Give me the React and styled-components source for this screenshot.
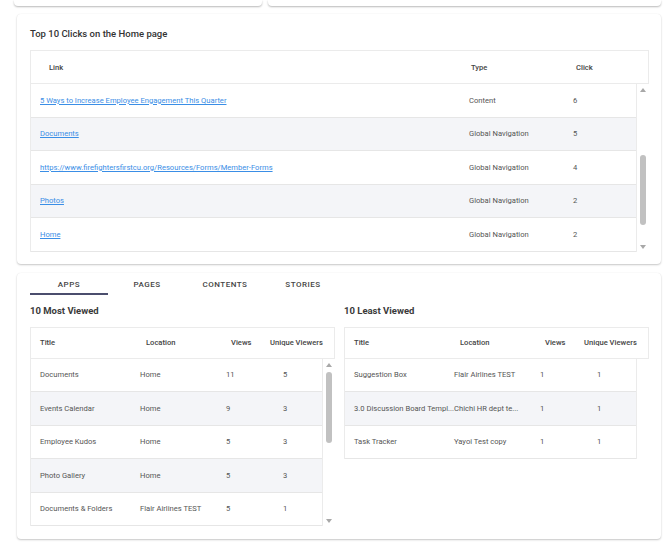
import React, { useState } from 'react';
import styled, { createGlobalStyle } from 'styled-components';

const GlobalStyle = createGlobalStyle`
    body {
        margin: 0;
        background: #ffffff;
        font-family: Roboto, "Liberation Sans", Arial, sans-serif;
    }
`;

const topClicks = [
    { link: '5 Ways to Increase Employee Engagement This Quarter', type: 'Content', click: 6 },
    { link: 'Documents', type: 'Global Navigation', click: 5 },
    { link: 'https://www.firefightersfirstcu.org/Resources/Forms/Member-Forms', type: 'Global Navigation', click: 4 },
    { link: 'Photos', type: 'Global Navigation', click: 2 },
    { link: 'Home', type: 'Global Navigation', click: 2 },
];

const mostViewed = [
    ['Documents', 'Home', '11', '5'],
    ['Events Calendar', 'Home', '9', '3'],
    ['Employee Kudos', 'Home', '5', '3'],
    ['Photo Gallery', 'Home', '5', '3'],
    ['Documents & Folders', 'Flair Airlines TEST', '5', '1'],
];

const leastViewed = [
    ['Suggestion Box', 'Flair Airlines TEST', '1', '1'],
    ['3.0 Discussion Board Templ...', 'Chichi HR dept te...', '1', '1'],
    ['Task Tracker', 'Yayoi Test copy', '1', '1'],
];

const tabs = ['Apps', 'Pages', 'Contents', 'Stories'];

// grid templates (header / body differ a bit like the original)
const clickHead = '422px 105px 1fr';
const clickBody = '429px 104px 1fr';
const viewHead = '106px 85px 39px 1fr';
const viewBody = '100px 86px 57px 1fr';

const Scrollbar = ({ thumbTop, thumbHeight, hidden }) => (
    <ScrollTrack>
        {!hidden && (
            <>
                <Arrow />
                <Thumb style={{ top: thumbTop, height: thumbHeight }} />
                <Arrow down />
            </>
        )}
    </ScrollTrack>
);

const ViewTable = ({ rows, scroll }) => (
    <TableBox>
        <HeadRow cols={viewHead} height={32}>
            <span>Title</span>
            <span>Location</span>
            <span>Views</span>
            <span>Unique Viewers</span>
        </HeadRow>
        <BodyWrap>
            <Rows>
                {rows.map((r, i) => (
                    <Row key={i} cols={viewBody} striped={i % 2 === 1}>
                        {r.map((c, j) => (
                            <Cell key={j}>{c}</Cell>
                        ))}
                    </Row>
                ))}
            </Rows>
            <Scrollbar hidden={!scroll} thumbTop={13} thumbHeight={71} />
        </BodyWrap>
    </TableBox>
);

const App = () => {
    const [tab, setTab] = useState(0);

    return (
        <Page>
            <GlobalStyle />
            <TopRow>
                <StubCard />
                <StubCard />
            </TopRow>

            <Card>
                <CardTitle>Top 10 Clicks on the Home page</CardTitle>
                <TableBox>
                    <HeadRow cols={clickHead} height={34} pad={18}>
                        <span>Link</span>
                        <span>Type</span>
                        <span>Click</span>
                    </HeadRow>
                    <BodyWrap>
                        <Rows>
                            {topClicks.map((r, i) => (
                                <Row key={i} cols={clickBody} striped={i % 2 === 1}>
                                    <Cell>
                                        <Link href="#">{r.link}</Link>
                                    </Cell>
                                    <Cell>{r.type}</Cell>
                                    <Cell>{r.click}</Cell>
                                </Row>
                            ))}
                        </Rows>
                        <Scrollbar thumbTop={71} thumbHeight={70} />
                    </BodyWrap>
                </TableBox>
            </Card>

            <Card bottom>
                <TabBar>
                    {tabs.map((t, i) => (
                        <Tab key={t} active={tab === i} onClick={() => setTab(i)}>
                            {t}
                        </Tab>
                    ))}
                </TabBar>
                <Columns>
                    <div>
                        <SectionTitle>10 Most Viewed</SectionTitle>
                        <ViewTable rows={mostViewed} scroll />
                    </div>
                    <div>
                        <SectionTitle>10 Least Viewed</SectionTitle>
                        <ViewTable rows={leastViewed} />
                    </div>
                </Columns>
            </Card>
        </Page>
    );
};

export default App;

// Styled Components
const Page = styled.div`
    width: 670px;
    height: 550px;
    overflow: hidden;
    box-sizing: border-box;
`;

const TopRow = styled.div`
    display: grid;
    grid-template-columns: 248px 393px;
    gap: 6px;
    padding-left: 14px;
    height: 6px;
    margin-bottom: 8px;
`;

const StubCard = styled.div`
    background: #ffffff;
    border-radius: 0 0 4px 4px;
    box-shadow: 0 1px 2px rgba(0, 0, 0, 0.28);
`;

const Card = styled.div`
    margin: ${({ bottom }) => (bottom ? '9px 9px 0 17px' : '0 9px 0 17px')};
    padding: ${({ bottom }) => (bottom ? '3px 12px 13px 13px' : '13px 12px 12px 13px')};
    background: #ffffff;
    border-radius: 4px;
    box-shadow: 0 1px 2px rgba(0, 0, 0, 0.22), 0 0 1px rgba(0, 0, 0, 0.08);
`;

const CardTitle = styled.div`
    font-size: 9.5px;
    font-weight: 500;
    color: #333333;
    line-height: 14px;
    margin-bottom: 9px;
`;

const TableBox = styled.div`
    display: flex;
    flex-direction: column;
`;

const HeadRow = styled.div`
    display: grid;
    grid-template-columns: ${({ cols }) => cols};
    align-items: center;
    height: ${({ height }) => height}px;
    padding-left: ${({ pad }) => pad || 9}px;
    border: 1px solid #ebebeb;
    box-sizing: border-box;
    font-size: 7.6px;
    font-weight: 500;
    color: #444444;
`;

const BodyWrap = styled.div`
    display: flex;
`;

const Rows = styled.div`
    flex: 1;
    border-left: 1px solid #ebebeb;
    border-right: 1px solid #ebebeb;
`;

const Row = styled.div`
    display: grid;
    grid-template-columns: ${({ cols }) => cols};
    align-items: center;
    height: 33.5px;
    padding-left: 9px;
    box-sizing: border-box;
    border-bottom: 1px solid #e6e6e6;
    background: ${({ striped }) => (striped ? '#f4f5f8' : '#ffffff')};
`;

const Cell = styled.span`
    font-size: 7.6px;
    color: #555555;
    white-space: nowrap;
`;

const Link = styled.a`
    color: #3a8ee6;
    text-decoration: underline;
`;

const ScrollTrack = styled.div`
    position: relative;
    width: 12px;
    flex-shrink: 0;
    display: flex;
    flex-direction: column;
    justify-content: space-between;
    align-items: center;
    padding: 4px 0 3px;
    box-sizing: border-box;
`;

const Arrow = styled.div`
    width: 0;
    height: 0;
    border-left: 3.5px solid transparent;
    border-right: 3.5px solid transparent;
    ${({ down }) =>
        down ? 'border-top: 4px solid #a8a8a8;' : 'border-bottom: 4px solid #a8a8a8;'}
`;

const Thumb = styled.div`
    position: absolute;
    left: 3px;
    width: 6px;
    background: #c1c1c1;
    border-radius: 3px;
`;

const TabBar = styled.div`
    display: flex;
`;

const Tab = styled.button`
    width: 78px;
    height: 19px;
    padding: 0;
    border: none;
    border-bottom: 2px solid ${({ active }) => (active ? '#4b4e6d' : 'transparent')};
    background: none;
    font-family: Roboto, "Liberation Sans", Arial, sans-serif;
    font-size: 8px;
    font-weight: 500;
    letter-spacing: 0.5px;
    text-transform: uppercase;
    color: #444444;
    cursor: pointer;
`;

const Columns = styled.div`
    display: grid;
    grid-template-columns: 1fr 1fr;
    gap: 9px;
`;

const SectionTitle = styled.div`
    font-size: 9.5px;
    font-weight: 700;
    color: #3a3a3a;
    line-height: 14px;
    margin: 9px 0 9px;
`;
